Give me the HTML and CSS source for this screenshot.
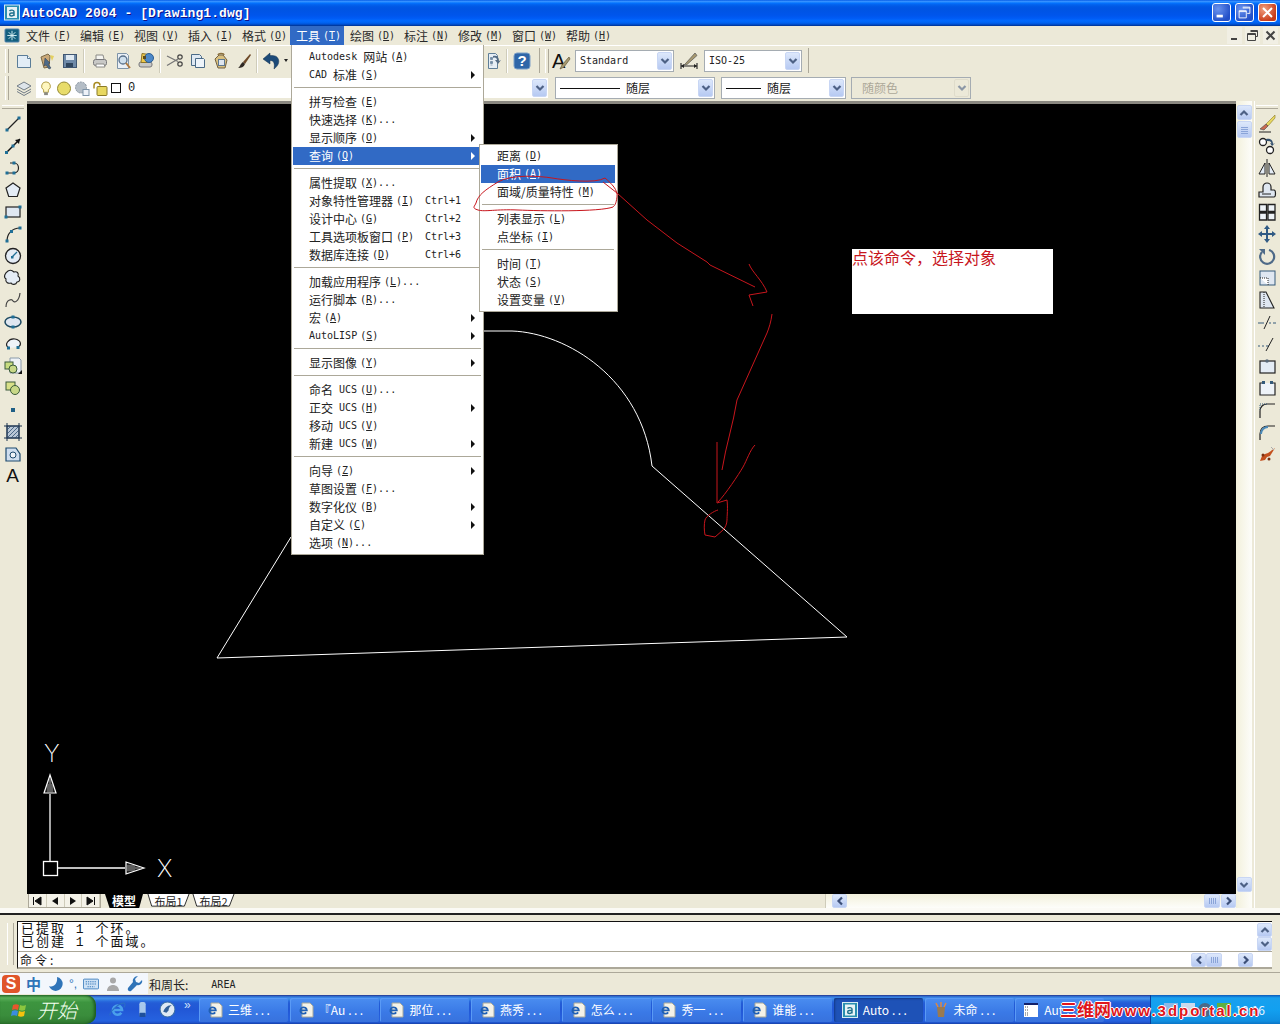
FILE: index.html
```html
<!DOCTYPE html>
<html lang="zh-CN">
<head>
<meta charset="utf-8">
<title>AutoCAD 2004 - [Drawing1.dwg]</title>
<link rel="stylesheet" href="styles.css">
</head>
<body>
<svg class="defs" aria-hidden="true">
  <defs>
    <symbol id="chev-d" viewBox="0 0 10 10"><path d="M1.500 3 5 6.500 8.500 3" fill="none" stroke="#4d6185" stroke-width="2.200"/></symbol>
    <symbol id="chev-u" viewBox="0 0 10 10"><path d="M1.500 7 5 3.500 8.500 7" fill="none" stroke="#4d6185" stroke-width="2.200"/></symbol>
    <symbol id="chev-l" viewBox="0 0 10 10"><path d="M7 1.500 3.500 5 7 8.500" fill="none" stroke="#3c4f78" stroke-width="2.200"/></symbol>
    <symbol id="chev-r" viewBox="0 0 10 10"><path d="M3 1.500 6.500 5 3 8.500" fill="none" stroke="#3c4f78" stroke-width="2.200"/></symbol>
    <symbol id="ie" viewBox="0 0 16 16"><path d="M4 8.500h8.300A4.300 4.300 0 1 0 11.600 11" fill="none" stroke="#4aa0ec" stroke-width="2.400"/><path d="M1 13.500C0 11 8 3 13 2c2.500-.5 2.500 2 1 4" fill="none" stroke="#2b6fc4" stroke-width="1"/></symbol>
    <symbol id="doc-ie" viewBox="0 0 16 16"><path d="M4 1h8l3 3v11H4z" fill="#f4f2e8" stroke="#a8a89c"/><path d="M2.500 8.300h6.300A3.200 3.200 0 1 0 8.200 10.400" fill="none" stroke="#1f5fb4" stroke-width="1.800"/></symbol>
    <symbol id="a-logo" viewBox="0 0 16 16"><rect x=".5" y=".5" width="15" height="15" fill="#2a8fb0" stroke="#d8ecf4"/><rect x="3" y="2.500" width="10" height="11" fill="#e8f3f6"/><path d="M5.500 6.500c1-1.300 4.500-1.300 4.500.6v4.400M10 8.500H7.500c-2.500 0-2.500 3 0 3 1 0 2-.5 2.500-1.300" fill="none" stroke="#1d6f8c" stroke-width="1.400"/></symbol>
  </defs>
</svg>

<div class="app">
  <header class="titlebar">
    <svg class="title-logo"><use href="#a-logo"/></svg>
    <span class="title-text">AutoCAD 2004 - [Drawing1.dwg]</span>
    <div class="caption">
      <span class="cap-btn"><svg viewBox="0 0 19 19"><rect x="4" y="12" width="7" height="3" fill="#fff"/></svg></span>
      <span class="cap-btn"><svg viewBox="0 0 19 19"><path d="M7.500 3.500h8v7h-3M3.500 7.500h8v8h-8z M3.500 8.500h8M7.500 4.500h8" fill="none" stroke="#fff"/></svg></span>
      <span class="cap-btn cap-close"><svg viewBox="0 0 19 19"><path d="M4.500 4.500l10 10M14.500 4.500l-10 10" stroke="#fff" stroke-width="2.200"/></svg></span>
    </div>
  </header>

  <nav class="menubar">
    <svg class="doc-icon" viewBox="0 0 16 16"><rect x=".5" y="1" width="15" height="14" rx="1" fill="#14607f" stroke="#5a86b0"/><path d="M8 3v10M3 8h10M4.500 4.500l7 7M11.500 4.500l-7 7" stroke="#d8f0f4" stroke-width="1"/></svg>
    <span class="mi">文件<span class="m k">(<u>F</u>)</span></span>
    <span class="mi">编辑<span class="m k">(<u>E</u>)</span></span>
    <span class="mi">视图<span class="m k">(<u>V</u>)</span></span>
    <span class="mi">插入<span class="m k">(<u>I</u>)</span></span>
    <span class="mi">格式<span class="m k">(<u>O</u>)</span></span>
    <span class="mi mi-on">工具<span class="m k">(<u>T</u>)</span></span>
    <span class="mi">绘图<span class="m k">(<u>D</u>)</span></span>
    <span class="mi">标注<span class="m k">(<u>N</u>)</span></span>
    <span class="mi">修改<span class="m k">(<u>M</u>)</span></span>
    <span class="mi">窗口<span class="m k">(<u>W</u>)</span></span>
    <span class="mi">帮助<span class="m k">(<u>H</u>)</span></span>
    <div class="mdi">
      <span class="mdi-btn"><svg viewBox="0 0 15 15"><rect x="4" y="10" width="6" height="2" fill="#444"/></svg></span>
      <span class="mdi-btn"><svg viewBox="0 0 15 15"><path d="M5.500 2.500h7v6h-2M2.500 5.500h8v7h-8zM2.500 6.500h8M5.500 3.500h7" fill="none" stroke="#444"/></svg></span>
      <span class="mdi-btn"><svg viewBox="0 0 15 15"><path d="M3.500 3.500l8 8M11.500 3.500l-8 8" stroke="#444" stroke-width="2"/></svg></span>
    </div>
  </nav>

  <div class="tbrow tbrow-1">
    <div class="grip-v"></div>
    <span class="tool"><svg viewBox="0 0 18 18"><path d="M2.500 3.500h10l3 3v9h-13z" fill="#e2edf6" stroke="#5b7d98"/><path d="M12.500 3.500v3h3" fill="#fff" stroke="#5b7d98"/></svg></span>
    <span class="tool"><svg viewBox="0 0 18 18"><path d="M3 5l7-3 2 2-1 11-5 1z" fill="#c9a878" stroke="#7b6a48"/><path d="M7 6l5 5-2 1 3 4-2 1-3-4-2 1z" fill="#4d6a88" stroke="#2a3d52" stroke-width=".5"/><path d="M12 3l4 1-2 5z" fill="#e4d060"/></svg></span>
    <span class="tool"><svg viewBox="0 0 18 18"><rect x="2.500" y="2.500" width="13" height="13" fill="#6f8aa8" stroke="#3f5672"/><rect x="5" y="3" width="8" height="5" fill="#dfe9f2"/><rect x="5" y="11" width="7" height="4" fill="#30465e"/></svg></span>
    <i class="sep sep-a"></i>
    <span class="tool"><svg viewBox="0 0 18 18"><path d="M5 7V3h7l1 4" fill="#f4f4f0" stroke="#8a8a86"/><rect x="2.500" y="7.500" width="13" height="6" rx="2" fill="#c8c8c6" stroke="#77777a"/><path d="M5 12h8l1 3H5z" fill="#fff" stroke="#8a8a86"/></svg></span>
    <span class="tool"><svg viewBox="0 0 18 18"><path d="M3.500 1.500h9l2 2v13h-11z" fill="#eaf0f6" stroke="#7d93a8"/><circle cx="9" cy="8" r="4" fill="#cfe0ee" stroke="#58708a" stroke-width="1.300"/><path d="M12 11l4 5" stroke="#b07a40" stroke-width="2"/></svg></span>
    <span class="tool"><svg viewBox="0 0 18 18"><rect x="2" y="10" width="13" height="5" rx="2" fill="#c8c8c6" stroke="#77777a"/><path d="M5 1.500l7 1-1 8H4z" fill="#efc94c" stroke="#8c7428"/><circle cx="12" cy="6" r="4.500" fill="#4c88c8" stroke="#2b5d93"/><rect x="6" y="4" width="3" height="3" fill="#5a4a20"/></svg></span>
    <i class="sep sep-b"></i>
    <span class="tool"><svg viewBox="0 0 18 18"><circle cx="14" cy="5" r="2.200" fill="none" stroke="#444" stroke-width="1.200"/><circle cx="14" cy="12" r="2.200" fill="none" stroke="#444" stroke-width="1.200"/><path d="M1 4l11 5.500M1 13.500L12 7" stroke="#777" stroke-width="1.300"/></svg></span>
    <span class="tool"><svg viewBox="0 0 18 18"><path d="M2.500 2.500h8l2 2v9h-10z" fill="#dfe9f3" stroke="#4b6b88"/><path d="M6.500 6.500h8l1 1v8h-9z" fill="#eef4fa" stroke="#4b6b88"/></svg></span>
    <span class="tool"><svg viewBox="0 0 18 18"><path d="M3 7l4-4h4l4 5-2 8H6z" fill="#d8c080" stroke="#736040"/><rect x="6.500" y="7.500" width="6" height="6" fill="#dfe6ef" stroke="#5e7890"/><path d="M6 3c0-2 6-2 6 0" fill="none" stroke="#8a6f3c" stroke-width="1.300"/></svg></span>
    <span class="tool"><svg viewBox="0 0 18 18"><path d="M15 2l-7 8 2 2 6-9z" fill="#6e4a28"/><path d="M8 10l2 2c-1 3-4 4-7 4 2-1 2-4 5-6z" fill="#302a24"/></svg></span>
    <i class="sep sep-c"></i>
    <span class="tool"><svg viewBox="0 0 18 18"><path d="M7 1L0 7l7 5V8.500c4 0 5 3 4 8.500 4-3 6-7 4-10.500C13.500 3.500 10.500 3.500 7 3.500z" fill="#1c4a78" stroke="#14304f" stroke-width=".5"/></svg></span>
    <i class="undo-arr"></i>
    <span class="tool-gap"></span>
    <span class="tool"><svg viewBox="0 0 18 18"><path d="M3.500 1.500h7l2 2v13h-9z" fill="#e6eef5" stroke="#5f7e98"/><path d="M5.500 5.500h2v2h-2zM5.500 9.500h2v2h-2zM5.500 13h2" fill="#6f8caa" stroke="#4a6680" stroke-width=".5"/><path d="M8 4c4-1 6 1 6 5l2-1-3 4-3-4h2c0-2-2-3-4-2z" fill="#536b84"/></svg></span>
    <i class="sep sep-d"></i>
    <span class="tool"><svg viewBox="0 0 18 18"><rect x="1" y="1" width="16" height="16" rx="3" fill="#2f66a8" stroke="#7da0c8"/><text x="9" y="14" class="q">?</text></svg></span>
    <div class="tb-end"></div>
    <div class="grip-v grip-2"></div>
    <span class="tool tool-a"><svg viewBox="0 0 20 22"><text x="1" y="18" class="big-a">A</text><path d="M18 7l-7 8-2 4 4-2 6-8z" fill="#a89a70" stroke="#5e5434" stroke-width=".7"/></svg></span>
    <div class="combo combo-std"><span class="m">Standard</span><span class="drop"><svg><use href="#chev-d"/></svg></span></div>
    <span class="tool tool-dim"><svg viewBox="0 0 20 20"><path d="M2 12v6M18 12v6M2 15h16" stroke="#222" stroke-width="1.100"/><path d="M2 15l3-2v4zM18 15l-3-2v4z" fill="#222"/><path d="M16 2L7 12l-2 2 3-.5 10-9z" fill="#a89a70" stroke="#555" stroke-width=".7"/></svg></span>
    <div class="combo combo-iso"><span class="m">ISO-25</span><span class="drop"><svg><use href="#chev-d"/></svg></span></div>
    <div class="tb-end"></div>
  </div>

  <div class="tbrow tbrow-2">
    <div class="grip-v"></div>
    <span class="tool tool-layers"><svg viewBox="0 0 18 18"><path d="M9 3l7 4-7 4-7-4z" fill="#dde4ea" stroke="#717c86"/><path d="M2 10l7 4 7-4M2 12.500l7 4 7-4" fill="none" stroke="#717c86"/></svg></span>
    <div class="combo combo-layer">
      <svg class="lay" viewBox="0 0 14 18"><path d="M7 2a4.600 4.600 0 0 0-2.500 8.500V13h5v-2.500A4.600 4.600 0 0 0 7 2z" fill="#fff7c0" stroke="#b09a40"/><rect x="5" y="13" width="4" height="3" fill="#8a8a80"/></svg>
      <svg class="lay" viewBox="0 0 16 16"><circle cx="8" cy="8" r="6.500" fill="#e8dc6a" stroke="#968a30"/></svg>
      <svg class="lay" viewBox="0 0 16 16"><circle cx="7" cy="7" r="5.500" fill="#b4bdc6" stroke="#8894a0" stroke-dasharray="2 1"/><rect x="9" y="9" width="6" height="6" fill="#eef2f8" stroke="#7d93a8"/></svg>
      <svg class="lay" viewBox="0 0 16 16"><path d="M2 8V5a3 3 0 0 1 6 0" fill="none" stroke="#a88a20" stroke-width="1.500"/><rect x="5" y="6" width="10" height="9" rx="1" fill="#e8d860" stroke="#8a7a28"/></svg>
      <i class="lay-box"></i><span class="lay-name">0</span>
      <span class="drop"><svg><use href="#chev-d"/></svg></span>
    </div>
    <div class="combo combo-ln1"><span class="ln ln-long"></span><span class="cj">随层</span><span class="drop"><svg><use href="#chev-d"/></svg></span></div>
    <div class="combo combo-ln2"><span class="ln ln-short"></span><span class="cj">随层</span><span class="drop"><svg><use href="#chev-d"/></svg></span></div>
    <div class="combo combo-off"><span class="cj">随颜色</span><span class="drop drop-off"><svg><use href="#chev-d"/></svg></span></div>
  </div>

  <main class="work">
    <aside class="vbar">
      <div class="grip-h"></div>
      <span class="vt"><svg viewBox="0 0 20 20"><path d="M4 16L16 4" stroke="#222" stroke-width="1.200"/><rect x="2.500" y="14.500" width="3" height="3" fill="#1f6f96"/><rect x="14.500" y="2.500" width="3" height="3" fill="#1f6f96"/></svg></span>
      <span class="vt"><svg viewBox="0 0 20 20"><path d="M3 17L17 3" stroke="#111" stroke-width="1.500"/><rect x="8.500" y="8.500" width="3" height="3" fill="#1f6f96"/><rect x="2" y="15" width="3" height="3" fill="#1f6f96"/><path d="M17 3l-5 1 4 4z" fill="#111"/></svg></span>
      <span class="vt"><svg viewBox="0 0 20 20"><path d="M4 15h7M11 5c6 0 6 10 0 10" fill="none" stroke="#222" stroke-width="1.200"/><path d="M7 5h4" stroke="#222"/><rect x="2.500" y="13.500" width="3" height="3" fill="#1f6f96"/><rect x="9.500" y="13.500" width="3" height="3" fill="#1f6f96"/><rect x="9.500" y="3.500" width="3" height="3" fill="#1f6f96"/></svg></span>
      <span class="vt"><svg viewBox="0 0 20 20"><path d="M10 3l7 5-2.700 8.500H5.700L3 8z" fill="#e4ecf5" stroke="#222" stroke-width="1.200"/></svg></span>
      <span class="vt"><svg viewBox="0 0 20 20"><rect x="3" y="5" width="14" height="10" fill="#dfe7f1" stroke="#222" stroke-width="1.200"/><rect x="1.500" y="13.500" width="3" height="3" fill="#1f6f96"/><rect x="15.500" y="3.500" width="3" height="3" fill="#1f6f96"/></svg></span>
      <span class="vt"><svg viewBox="0 0 20 20"><path d="M4 17C4 10 9 4 17 4" fill="none" stroke="#222" stroke-width="1.200"/><rect x="2.500" y="15.500" width="3" height="3" fill="#1f6f96"/><rect x="7" y="6" width="3" height="3" fill="#1f6f96"/><rect x="15.500" y="2.500" width="3" height="3" fill="#1f6f96"/></svg></span>
      <span class="vt"><svg viewBox="0 0 20 20"><circle cx="10" cy="10" r="7.500" fill="#e4ecf5" stroke="#222" stroke-width="1.300"/><path d="M9 11l5-5" stroke="#1f6f96" stroke-width="1.300"/><rect x="8" y="10" width="2.500" height="2.500" fill="#1f6f96"/></svg></span>
      <span class="vt"><svg viewBox="0 0 20 20"><path d="M5 3c3-2 5 0 6 1 3-1 5 1 4 4 3 2 2 6-1 6-1 3-5 3-6 1-3 1-6-1-5-4-3-2-1-6 2-8z" fill="#e4ecf5" stroke="#222" stroke-width="1.100"/></svg></span>
      <span class="vt"><svg viewBox="0 0 20 20"><path d="M3 17C3 9 9 9 10 11s6 1 7-8" fill="none" stroke="#444" stroke-width="1.200"/></svg></span>
      <span class="vt"><svg viewBox="0 0 20 20"><ellipse cx="10" cy="10" rx="8" ry="5" fill="#dfe7f1" stroke="#1c4860" stroke-width="1.500"/><rect x="8.500" y="3.500" width="3" height="3" fill="#1f6f96"/><rect x="8.500" y="13.500" width="3" height="3" fill="#1f6f96"/></svg></span>
      <span class="vt"><svg viewBox="0 0 20 20"><path d="M6 14C0 11 6 4 12 5s7 6 3 8" fill="#eef3f8" stroke="#222" stroke-width="1.200"/><rect x="4" y="12.500" width="3" height="3" fill="#1f6f96"/><rect x="13.500" y="12" width="3" height="3" fill="#1f6f96"/></svg></span>
      <span class="vt"><svg viewBox="0 0 20 20"><path d="M7 2h9l2 2v13H7z" fill="#eef2f6" stroke="#8a9aaa"/><rect x="2" y="6" width="8" height="7" fill="#c8dc80" stroke="#3a5a3a"/><circle cx="10" cy="13" r="4" fill="#c8d888" stroke="#3a5a3a"/><path d="M15 18l4-4v4z" fill="#111"/></svg></span>
      <span class="vt"><svg viewBox="0 0 20 20"><rect x="3" y="4" width="9" height="8" fill="#d8e088" stroke="#3a5a3a"/><circle cx="12" cy="12" r="4.500" fill="#c8d888" stroke="#3a5a3a"/></svg></span>
      <span class="vt"><svg viewBox="0 0 20 20"><rect x="8" y="8" width="4" height="4" fill="#1f5f86"/></svg></span>
      <span class="vt"><svg viewBox="0 0 20 20"><rect x="4" y="4" width="12" height="12" fill="#b9c7d6" stroke="#1d3550"/><path d="M4 8l4-4M4 12l8-8M4 16L16 4M8 16l8-8M12 16l4-4" stroke="#4d6a88"/><path d="M1 4h18M1 16h18M4 1v18M16 1v18" stroke="#1d3550"/></svg></span>
      <span class="vt"><svg viewBox="0 0 20 20"><path d="M3 4h10l4 6v7H3z" fill="#cfdeef" stroke="#1d4a6e" stroke-width="1.200"/><circle cx="10" cy="11" r="3" fill="#eef3f8" stroke="#1d4a6e"/></svg></span>
      <span class="vt vt-a">A</span>
    </aside>

    <div class="centre">
      <div class="view">
        <svg class="drawing" viewBox="0 0 1209 790" aria-hidden="true">
          <path d="M457 227H485C540 229 615 275 625 362L820 533 190 554 264 433" fill="none" stroke="#fff"/>
          <path d="M23 690V757" stroke="#fff" stroke-width="1.300"/>
          <path d="M23 671l-6 18h12z" fill="#222" stroke="#fff" stroke-width="1.200"/>
          <path d="M23 675v14M21 680v9M25 680v9" stroke="#999"/>
          <rect x="16.500" y="757.500" width="14" height="14" fill="none" stroke="#fff" stroke-width="1.300"/>
          <path d="M31 764H98" stroke="#fff" stroke-width="1.300"/>
          <path d="M117 764l-18-6v12z" fill="#222" stroke="#fff" stroke-width="1.200"/>
          <path d="M99 764h14M99 762h9M99 766h9" stroke="#999"/>
        </svg>
        <span class="axis axis-y">Y</span>
        <span class="axis axis-x">X</span>
        <div class="note">点该命令，选择对象</div>
      </div>
      <div class="tabrow">
        <div class="navbtns">
          <span class="nav"><svg viewBox="0 0 12 12"><path d="M2.500 2v8M10 2L4 6l6 4z" fill="#111" stroke="#111"/></svg></span>
          <span class="nav"><svg viewBox="0 0 12 12"><path d="M9 2L3 6l6 4z" fill="#111"/></svg></span>
          <span class="nav"><svg viewBox="0 0 12 12"><path d="M3 2l6 4-6 4z" fill="#111"/></svg></span>
          <span class="nav"><svg viewBox="0 0 12 12"><path d="M9.500 2v8M2 2l6 4-6 4z" fill="#111" stroke="#111"/></svg></span>
        </div>
        <span class="tab tab-on">模型</span>
        <span class="tab"><svg class="tab-edge" viewBox="0 0 46 15"><path d="M1 0l4 13H40L45 0" fill="#fff" stroke="#222"/></svg><span class="tab-t">布局1</span></span>
        <span class="tab"><svg class="tab-edge" viewBox="0 0 46 15"><path d="M1 0l4 13H40L45 0" fill="#fff" stroke="#222"/></svg><span class="tab-t">布局2</span></span>
        <div class="hscroll">
          <span class="sb sb-l"><svg><use href="#chev-l"/></svg></span>
          <span class="track"></span>
          <span class="sb sb-thumb"><i></i></span>
          <span class="sb sb-r"><svg><use href="#chev-r"/></svg></span>
        </div>
      </div>
    </div>

    <div class="vscroll">
      <span class="sb"><svg><use href="#chev-u"/></svg></span>
      <span class="sb sb-vthumb"><i></i></span>
      <span class="vtrack"></span>
      <span class="sb"><svg><use href="#chev-d"/></svg></span>
    </div>

    <aside class="vbar vbar-r">
      <div class="grip-h"></div>
      <span class="vt"><svg viewBox="0 0 20 20"><path d="M18 1l-9 9 2 2 7-8z" fill="#e8d860" stroke="#8a7a28" stroke-width=".6"/><path d="M9 10l2 2-4 4-4-1z" fill="#c86a50" stroke="#444" stroke-width=".6"/><path d="M2 18h12" stroke="#222"/></svg></span>
      <span class="vt"><svg viewBox="0 0 20 20"><circle cx="6" cy="6" r="3.500" fill="#fff" stroke="#222" stroke-width="1.300"/><circle cx="13" cy="14" r="3.500" fill="#fff" stroke="#222" stroke-width="1.300"/><path d="M9 3c4-1 7 1 7 5l2-1-3 3-2-3 1.500.5C14 5 12 5 9 5z" fill="#33506e"/></svg></span>
      <span class="vt"><svg viewBox="0 0 20 20"><path d="M10 1v18" stroke="#222"/><path d="M8 5v11H2zM12 5v11h6z" fill="#e4ecf5" stroke="#222"/></svg></span>
      <span class="vt"><svg viewBox="0 0 20 20"><path d="M2 17v-5h4V7a4 4 0 0 1 8 0v3h3c2 0 2 7 0 7z" fill="#dfe7f1" stroke="#222" stroke-width="1.200"/><path d="M5 14h9" stroke="#222"/></svg></span>
      <span class="vt"><svg viewBox="0 0 20 20"><path d="M2.500 2.500h7v7h-7zM11 2.500h7v7h-7zM2.500 11h7v7h-7zM11 11h7v7h-7z" fill="#eef3f8" stroke="#222" stroke-width="1.300"/></svg></span>
      <span class="vt"><svg viewBox="0 0 20 20"><path d="M10 1l3 4h-2v4h4V7l4 3-4 3v-2h-4v4h2l-3 4-3-4h2v-4H5v2l-4-3 4-3v2h4V5H7z" fill="#305a84"/></svg></span>
      <span class="vt"><svg viewBox="0 0 20 20"><path d="M5 6a7 7 0 1 0 7-2" fill="none" stroke="#4e6a88" stroke-width="2.200"/><path d="M2 3h6v6z" fill="#4e6a88"/></svg></span>
      <span class="vt"><svg viewBox="0 0 20 20"><rect x="3" y="3" width="15" height="14" fill="#dfe7f1" stroke="#345a7a"/><path d="M3 10h8v7" fill="#fff" stroke="#222" stroke-dasharray="1 1"/></svg></span>
      <span class="vt"><svg viewBox="0 0 20 20"><path d="M3 2v16h14L9 2z" fill="#dfe7f1" stroke="#222" stroke-width="1.100"/><path d="M7 2v16" stroke="#222" stroke-dasharray="1 1"/></svg></span>
      <span class="vt"><svg viewBox="0 0 20 20"><path d="M1 11h6M12 11h2M16 11h3" stroke="#345a7a" stroke-width="1.100"/><path d="M7 17L13 4" stroke="#222"/></svg></span>
      <span class="vt"><svg viewBox="0 0 20 20"><path d="M1 12h2M5 12h2M9 12h3" stroke="#345a7a" stroke-width="1.100"/><path d="M9 17L16 4" stroke="#222"/></svg></span>
      <span class="vt"><svg viewBox="0 0 20 20"><rect x="3" y="5" width="15" height="12" fill="#e4ecf5" stroke="#222" stroke-width="1.200"/><circle cx="10" cy="5" r="1.800" fill="#5a6a7a"/></svg></span>
      <span class="vt"><svg viewBox="0 0 20 20"><path d="M7 5H3v12h15V5h-4" fill="#eef3f8" stroke="#222" stroke-width="1.200"/><rect x="5" y="3" width="3" height="3" fill="#345a7a"/><rect x="13" y="3" width="3" height="3" fill="#345a7a"/></svg></span>
      <span class="vt"><svg viewBox="0 0 20 20"><path d="M3 18v-7c0-4 3-7 7-7h8" fill="none" stroke="#222" stroke-width="1.200"/><path d="M3 10V4h7" fill="none" stroke="#345a7a" stroke-dasharray="1 1"/></svg></span>
      <span class="vt"><svg viewBox="0 0 20 20"><path d="M3 18v-6c0-5 3-8 8-8h7" fill="none" stroke="#222" stroke-width="1.200"/><path d="M4 12c0-4 3-7 7-7" fill="none" stroke="#4c8ab8" stroke-width="2"/></svg></span>
      <span class="vt"><svg viewBox="0 0 20 20"><path d="M3 17l5-1 2-3 3-1 5-8-7 5-3 1-3 2z" fill="#c4501e"/><circle cx="6" cy="11" r="1.500" fill="#7a3010"/><circle cx="12" cy="15" r="1.500" fill="#7a3010"/><path d="M14 3l3 3" stroke="#aaa"/></svg></span>
    </aside>
  </main>

  <div class="workfoot"></div>

  <section class="command">
    <div class="grip-v grip-cmd"></div>
    <div class="cmdbox">
      <div class="log">
        <div class="log-text">已提取 1 个环。<br>已创建 1 个面域。</div>
        <div class="log-scroll">
          <span class="sb"><svg><use href="#chev-u"/></svg></span>
          <span class="sb"><svg><use href="#chev-d"/></svg></span>
        </div>
      </div>
      <div class="prompt">
        <span class="prompt-t">命令:</span>
        <div class="pscroll">
          <span class="sb"><svg><use href="#chev-l"/></svg></span>
          <span class="sb sb-thumb"><i></i></span>
          <span class="ptrack"></span>
          <span class="sb"><svg><use href="#chev-r"/></svg></span>
        </div>
      </div>
    </div>
  </section>

  <div class="status"><span>和周长:</span><span class="m status-cmd">AREA</span></div>

  <footer class="taskbar">
    <div class="start">
      <svg viewBox="0 0 18 18"><path d="M2 4c2-1 4-1 6 0l-1 5c-2-1-4-1-6 0z" fill="#e8562c"/><path d="M9 4c2 1 4 1 6 0l-1 5c-2 1-4 1-6 0z" fill="#8cc63f"/><path d="M1 10c2-1 4-1 6 0l-1 5c-2-1-4-1-6 0z" fill="#3c8ce0"/><path d="M8 10c2 1 4 1 6 0l-1 5c-2 1-4 1-6 0z" fill="#f6c20e"/></svg>
      <span>开始</span>
    </div>
    <div class="quick">
      <svg viewBox="0 0 16 16"><use href="#ie"/></svg>
      <svg viewBox="0 0 16 16"><rect x="5" y="1" width="6" height="14" rx="2" fill="#a8c8ec"/><rect x="5" y="11" width="6" height="4" rx="1" fill="#1e4f9c"/></svg>
      <svg viewBox="0 0 16 16"><circle cx="8" cy="8" r="7" fill="#dfe9f4" stroke="#3a6ea8"/><path d="M4 10c2-5 5-6 8-6-2 1-3 3-3 5l-2 2z" fill="#315f98"/></svg>
      <span class="more">»</span>
    </div>
    <div class="tasks">
      <span class="task"><svg><use href="#doc-ie"/></svg><span>三维<b>...</b></span></span>
      <span class="task"><svg><use href="#doc-ie"/></svg><span>『Au<b>...</b></span></span>
      <span class="task"><svg><use href="#doc-ie"/></svg><span>那位<b>...</b></span></span>
      <span class="task"><svg><use href="#doc-ie"/></svg><span>燕秀<b>...</b></span></span>
      <span class="task"><svg><use href="#doc-ie"/></svg><span>怎么<b>...</b></span></span>
      <span class="task"><svg><use href="#doc-ie"/></svg><span>秀一<b>...</b></span></span>
      <span class="task"><svg><use href="#doc-ie"/></svg><span>谁能<b>...</b></span></span>
      <span class="task task-on"><svg><use href="#a-logo"/></svg><span>Auto<b>...</b></span></span>
      <span class="task"><svg viewBox="0 0 16 16"><path d="M4 5h8l-1 10H5z" fill="#9a7a50"/><path d="M5 5L3 1M8 5V0M11 5l2-4" stroke="#d84" stroke-width="1.500"/></svg><span>未命<b>...</b></span></span>
      <span class="task"><svg viewBox="0 0 16 16"><rect x="1" y="1" width="14" height="14" fill="#fff"/><rect x="1" y="1" width="14" height="2" fill="#12206a"/><path d="M2 5h4M2 8h4M2 11h4M2 13h4" stroke="#555" stroke-dasharray="1 1"/></svg><span>Aut<b>...</b></span></span>
    </div>
    <div class="tray">
      <i class="ti ti-a"></i><i class="ti ti-b"></i><i class="ti ti-c"></i><i class="ti ti-d"></i>
      <span class="clock">10:16</span>
    </div>
  </footer>
</div>

<div class="ime">
  <span class="ime-s">S</span>
  <span class="ime-zh">中</span>
  <svg viewBox="0 0 16 16"><path d="M10 1a7 7 0 1 1-8 9c4 2 9-2 8-9z" fill="#2f74b8"/></svg>
  <span class="ime-p">°,</span>
  <svg viewBox="0 0 18 14"><rect x=".5" y="1.500" width="17" height="11" rx="1" fill="#cfe2f5" stroke="#3d7dbc"/><path d="M3 4.500h12M3 7h12M5 10h8" stroke="#3d7dbc" stroke-dasharray="1.500 1" stroke-width="1.200"/></svg>
  <svg viewBox="0 0 16 16"><circle cx="8" cy="4.500" r="3" fill="#a8a8a8"/><path d="M2 15c0-8 12-8 12 0z" fill="#a8a8a8"/></svg>
  <svg viewBox="0 0 16 16"><path d="M15 4l-3 3-3-1-1-3 3-3C8 0 5 3 6 6L1 12c-1 2 1 4 3 3l6-6c3 1 6-2 5-5z" fill="#2f74b8"/></svg>
</div>

<div class="menu menu-main">
  <div class="row"><span class="m">Autodesk</span><span class="gap6"></span>网站<span class="m k">(<u>A</u>)</span></div>
  <div class="row"><span class="m">CAD</span><span class="gap6"></span>标准<span class="m k">(<u>S</u>)</span><i class="arr"></i></div>
  <hr>
  <div class="row">拼写检查<span class="m k">(<u>E</u>)</span></div>
  <div class="row">快速选择<span class="m k">(<u>K</u>)...</span></div>
  <div class="row">显示顺序<span class="m k">(<u>O</u>)</span><i class="arr"></i></div>
  <div class="row row-on">查询<span class="m k">(<u>Q</u>)</span><i class="arr"></i></div>
  <hr>
  <div class="row">属性提取<span class="m k">(<u>X</u>)...</span></div>
  <div class="row">对象特性管理器<span class="m k">(<u>I</u>)</span><span class="m acc">Ctrl+1</span></div>
  <div class="row">设计中心<span class="m k">(<u>G</u>)</span><span class="m acc">Ctrl+2</span></div>
  <div class="row">工具选项板窗口<span class="m k">(<u>P</u>)</span><span class="m acc">Ctrl+3</span></div>
  <div class="row">数据库连接<span class="m k">(<u>D</u>)</span><span class="m acc">Ctrl+6</span></div>
  <hr>
  <div class="row">加载应用程序<span class="m k">(<u>L</u>)...</span></div>
  <div class="row">运行脚本<span class="m k">(<u>R</u>)...</span></div>
  <div class="row">宏<span class="m k">(<u>A</u>)</span><i class="arr"></i></div>
  <div class="row"><span class="m">AutoLISP</span><span class="m k">(<u>S</u>)</span><i class="arr"></i></div>
  <hr>
  <div class="row">显示图像<span class="m k">(<u>Y</u>)</span><i class="arr"></i></div>
  <hr>
  <div class="row">命名<span class="gap6"></span><span class="m">UCS</span><span class="m k">(<u>U</u>)...</span></div>
  <div class="row">正交<span class="gap6"></span><span class="m">UCS</span><span class="m k">(<u>H</u>)</span><i class="arr"></i></div>
  <div class="row">移动<span class="gap6"></span><span class="m">UCS</span><span class="m k">(<u>V</u>)</span></div>
  <div class="row">新建<span class="gap6"></span><span class="m">UCS</span><span class="m k">(<u>W</u>)</span><i class="arr"></i></div>
  <hr>
  <div class="row">向导<span class="m k">(<u>Z</u>)</span><i class="arr"></i></div>
  <div class="row">草图设置<span class="m k">(<u>F</u>)...</span></div>
  <div class="row">数字化仪<span class="m k">(<u>B</u>)</span><i class="arr"></i></div>
  <div class="row">自定义<span class="m k">(<u>C</u>)</span><i class="arr"></i></div>
  <div class="row">选项<span class="m k">(<u>N</u>)...</span></div>
</div>

<div class="menu menu-sub">
  <div class="row">距离<span class="m k">(<u>D</u>)</span></div>
  <div class="row row-on">面积<span class="m k">(<u>A</u>)</span></div>
  <div class="row">面域/质量特性<span class="m k">(<u>M</u>)</span></div>
  <hr>
  <div class="row">列表显示<span class="m k">(<u>L</u>)</span></div>
  <div class="row">点坐标<span class="m k">(<u>I</u>)</span></div>
  <hr>
  <div class="row">时间<span class="m k">(<u>T</u>)</span></div>
  <div class="row">状态<span class="m k">(<u>S</u>)</span></div>
  <div class="row">设置变量<span class="m k">(<u>V</u>)</span></div>
</div>

<svg class="marks" viewBox="0 0 1280 1024" aria-hidden="true">
  <path d="M476 203C478 195 485 190 498 182S540 176 552 178 595 184 605 178C612 184 618 190 617 197S615 205 613 207C600 212 540 211 518 210S485 212 478 210 475 206 476 203z"/>
  <path d="M603 182L617 193 647 220 677 243 707 262 710 265 755 287"/>
  <path d="M749 264C752 272 762 280 767 292L749 295 753 306"/>
  <path d="M772 314C771 322 769 328 767 333L737 400C733 425 726 445 722 470"/>
  <path d="M717 442V503L727 500C728 508 727 516 727 520S725 528 723 530L715 537 705 535C704 530 704 524 705 520S714 511 718 510"/>
  <path d="M755 445C750 450 747 460 743 467S725 495 718 502"/>
</svg>
<div class="wm"><span>三维网</span>www.3dportal.cn</div>
</body>
</html>
```
FILE: styles.css
```css
* { box-sizing: border-box; }
html, body { margin: 0; padding: 0; width: 1280px; height: 1024px; overflow: hidden; }
body { position: relative; background: #ece9d8; font: 12px/1 "Noto Sans CJK SC", "Liberation Sans", sans-serif; color: #222; }
.defs { position: absolute; width: 0; height: 0; }
svg { display: block; flex: none; }
.app { display: flex; flex-direction: column; width: 1280px; height: 1024px; }
.m { font-family: "DejaVu Sans Mono", "Noto Sans CJK SC", monospace; font-size: 10px; }
.k { margin-left: 3px; }
.gap6 { display: inline-block; width: 6px; }

.titlebar { height: 26px; flex: none; display: flex; align-items: center; padding: 0 3px 1px 4px;
  background: linear-gradient(#0058e6 0, #3a93ff 5%, #1a84ff 9%, #036ffc 13%, #0262ee 18%, #0057e5 26%, #0054e3 35%, #0055eb 58%, #005bf5 70%, #026afe 80%, #0062ef 88%, #0052d6 93%, #0040ab 97%, #003092 100%); }
.title-logo { width: 16px; height: 17px; margin-right: 2px; }
.title-text { font: bold 13px/1 "Liberation Mono", monospace; color: #fff; text-shadow: 1px 1px 0 #0f1089; letter-spacing: .08px; padding-top: 2px; }
.caption { margin-left: auto; display: flex; gap: 4px; }
.cap-btn { width: 19px; height: 19px; border: 1px solid #fff; border-radius: 3px; background: radial-gradient(circle at 30% 30%, #6a93ee, #2350c8 75%); overflow: hidden; }
.cap-btn svg { width: 17px; height: 17px; }
.cap-close { background: radial-gradient(circle at 30% 30%, #f0a080, #c83a18 75%); }

.menubar { height: 19px; flex: none; display: flex; align-items: center; padding-left: 4px; background: #ece9d8; position: relative; }
.doc-icon { width: 16px; height: 15px; }
.mi { width: 54px; height: 19px; display: flex; align-items: center; padding-left: 6px; white-space: nowrap; color: #2a2a2a; }
.mi-on { background: #316ac5; color: #fff; }
.mdi { margin-left: auto; display: flex; gap: 3px; padding-right: 2px; }
.mdi-btn { width: 15px; height: 17px; background: #f1efe4; display: flex; align-items: center; }
.mdi-btn svg { width: 15px; height: 15px; }

.tbrow { height: 28px; flex: none; display: flex; align-items: center; padding-left: 5px; background: #ece9d8; }
.tbrow-1 { border-top: 1px solid #fff; padding-top: 2px; }
.tbrow-2 { padding-top: 2px; }
.grip-v { width: 4px; height: 24px; margin-right: 3px; border-left: 1px solid #fff; border-right: 1px solid #aca899; background: #ece9d8; flex: none; }
.tool { width: 23px; height: 24px; display: flex; align-items: center; justify-content: center; flex: none; }
.tool svg { width: 18px; height: 18px; }
.sep { width: 2px; height: 24px; border-left: 1px solid #cfccba; border-right: 1px solid #fff; flex: none; }
.sep-a { margin: 0 3px 0 2px; }
.sep-b { margin: 0 2px 0 2px; }
.sep-c { margin: 0 2px 0 1px; }
.sep-d { margin: 0 2px 0 1px; }
.undo-arr { width: 0; height: 0; border-style: solid; border-width: 3px 2px 0 2px; border-color: #222 transparent transparent; margin-left: 1px; flex: none; }
.tool-gap { width: 194px; flex: none; }
.tb-end { width: 3px; height: 26px; border-right: 1px solid #aca899; margin-left: 4px; flex: none; }
.grip-2 { margin-left: 5px; margin-right: 1px; }
.tool-a { width: 22px; margin-right: 3px; }
.tool-a svg { width: 20px; height: 22px; }
.big-a { font: 20px "Liberation Sans", sans-serif; fill: #111; }
.q { font: bold 15px "Liberation Sans", sans-serif; fill: #fff; text-anchor: middle; }
.tool-dim { width: 30px; }
.tool-dim svg { width: 20px; height: 20px; }

.combo { height: 22px; display: flex; align-items: center; background: #fff; border: 1px solid #a5acb2; padding: 0 1px 0 4px; flex: none; position: relative; }
.drop { margin-left: auto; width: 15px; height: 18px; background: linear-gradient(#dde8fb, #b6c9f2); border: 1px solid #c8d6f4; border-radius: 2px; display: flex; align-items: center; justify-content: center; flex: none; }
.drop svg, .sb svg { width: 10px; height: 10px; }
.combo-std { width: 99px; }
.combo-iso { width: 98px; }
.tool-layers { width: 22px; margin-left: 1px; }
.combo-layer { width: 514px; padding-left: 2px; gap: 2px; border-color: #ece9d8; }
.lay { width: 16px; height: 17px; }
.lay-box { width: 10px; height: 10px; border: 1px solid #111; margin-left: 1px; flex: none; }
.lay-name { font: 12px "Liberation Mono", monospace; margin-left: 5px; }
.combo-ln1 { width: 160px; margin-left: 6px; }
.combo-ln2 { width: 125px; margin-left: 6px; }
.combo-off { width: 120px; margin-left: 5px; background: #ece9d8; color: #aca899; padding-left: 10px; }
.drop-off { background: #ece9d8; border-color: #d8d5c4; opacity: .6; }
.ln { height: 1px; background: #111; flex: none; }
.ln-long { width: 60px; }
.ln-short { width: 35px; }
.cj { margin-left: 6px; font-size: 12px; }
.combo-off .cj { margin-left: 0; }

.work { height: 807px; flex: none; display: flex; }
.vbar { width: 27px; flex: none; background: #ece9d8; display: flex; flex-direction: column; align-items: center; padding: 4px 2px 0 0; }
.vbar-r { width: 26px; margin-left: 2px; border-left: 1px solid #fff; }
.grip-h { width: 22px; height: 4px; border-top: 1px solid #fff; border-bottom: 1px solid #aca899; margin-bottom: 4px; flex: none; }
.vt { width: 22px; height: 22px; display: flex; align-items: center; justify-content: center; flex: none; }
.vt svg { width: 20px; height: 20px; }
.vt-a { font: 19px "Liberation Sans", sans-serif; color: #111; }

.centre { width: 1209px; flex: none; display: flex; flex-direction: column; }
.view { position: relative; height: 793px; flex: none; background: #000; border-top: 3px solid #8a8880; overflow: hidden; }
.drawing { position: absolute; left: 0; top: 0; width: 1209px; height: 790px; }
.axis { position: absolute; color: #fff; font: 200 24px/1 Inter, "Liberation Sans", sans-serif; }
.axis-y { left: 17px; top: 638px; }
.axis-x { left: 130px; top: 753px; }
.note { position: absolute; left: 825px; top: 145px; width: 201px; height: 65px; background: #fff; color: #c8161d; font-size: 16px; line-height: 14px; padding-top: 1px; }

.tabrow { height: 14px; flex: none; display: flex; align-items: flex-start; background: #ece9d8; padding-left: 1px; }
.navbtns { display: flex; width: 73px; height: 14px; border: 1px solid #aca899; border-top: 0; background: #f4f2e8; margin-right: 4px; flex: none; }
.nav { width: 18px; display: flex; align-items: center; justify-content: center; border-right: 1px solid #cfccba; }
.nav svg { width: 12px; height: 12px; }
.tab { position: relative; width: 45px; height: 14px; margin-right: 0; display: flex; align-items: center; justify-content: center; font-size: 12px; }
.tab-on { width: 38px; margin-right: 3px; background: #000; color: #fff; font-weight: 700; clip-path: polygon(0 0, 100% 0, 90% 100%, 12% 100%); }
.tab-edge { position: absolute; left: 0; top: 0; width: 45px; height: 14px; }
.tab-t { position: relative; font-size: 11px; }
.hscroll { margin-left: auto; width: 411px; height: 14px; display: flex; background: linear-gradient(#f3f1dc, #fdfdfa); padding-left: 6px; border-left: 1px solid #cfccba; }
.sb { width: 15px; height: 14px; background: linear-gradient(#dde8fb, #b6c9f2); border: 1px solid #c8d6f4; border-radius: 2px; display: flex; align-items: center; justify-content: center; flex: none; }
.sb i { display: block; width: 7px; height: 6px; background: repeating-linear-gradient(90deg, #8aa4d8 0 1px, transparent 1px 2px); }
.track { flex: 1; }
.sb-thumb { width: 16px; }
.sb-r { margin-left: 1px; }

.vscroll { width: 16px; flex: none; display: flex; flex-direction: column; align-items: center; padding: 4px 0 16px; background: linear-gradient(90deg, #f3f1dc, #fdfdfa); }
.vscroll .sb { height: 15px; }
.vscroll .sb-vthumb { height: 17px; margin-top: 1px; }
.sb-vthumb i { width: 7px; height: 8px; background: repeating-linear-gradient(0deg, #8aa4d8 0 1px, transparent 1px 2px); }
.vtrack { flex: 1; }

.workfoot { height: 9px; flex: none; background: #ece9d8; border-top: 5px solid #fbfaf5; border-bottom: 2px solid #ece9d8; box-shadow: inset 0 -2px 0 #222; }

.command { height: 55px; flex: none; display: flex; padding: 4px 8px 3px 7px; background: #ece9d8; }
.grip-cmd { height: 42px; width: 7px; margin: 2px 3px 0 0; }
.cmdbox { flex: 1; display: flex; flex-direction: column; background: #fff; border-top: 1px solid #111; border-left: 1px solid #111; border-bottom: 2px solid #aca899; }
.log { height: 30px; display: flex; flex: none; border-bottom: 1px solid #aca899; }
.log-text { font: 13px/13px "Liberation Mono", "Noto Sans CJK SC", monospace; letter-spacing: 2px; padding: 1px 0 0 3px; color: #111; white-space: nowrap; }
.log-scroll { margin-left: auto; width: 15px; display: flex; flex-direction: column; padding-top: 1px; }
.prompt { flex: 1; display: flex; align-items: center; min-height: 0; padding-left: 2px; }
.prompt-t { font-size: 12px; letter-spacing: 3px; color: #111; }
.pscroll { margin-left: auto; width: 62px; display: flex; margin-right: 19px; }
.ptrack { flex: 1; }

.status { height: 23px; flex: none; display: flex; align-items: center; padding: 2px 0 0 149px; background: #ece9d8; border-top: 1px solid #aca899; }
.status-cmd { margin-left: 23px; }

.taskbar { height: 29px; flex: none; display: flex; align-items: stretch; color: #fff;
  background: linear-gradient(#1f2f86 0, #3165c4 4%, #3682e5 8%, #4490e6 12%, #3883e5 16%, #2b71e0 20%, #2663da 24%, #235bd6 30%, #2157d6 50%, #245ddb 70%, #2562df 88%, #2158d4 94%, #1941a5 100%); }
.start { width: 96px; flex: none; display: flex; align-items: center; gap: 8px; padding-left: 11px; border-radius: 0 10px 10px 0; background: linear-gradient(#2f7c33 0, #5bb05a 10%, #3d953f 25%, #3a8d3c 70%, #2f7a30 100%); box-shadow: inset -2px 0 3px #1d5a20; }
.start svg { width: 18px; height: 18px; }
.start span { font-size: 20px; font-style: italic; font-weight: 300; color: #f4fff0; }
.quick { width: 103px; flex: none; display: flex; align-items: center; padding-left: 13px; gap: 8px; }
.quick svg { width: 17px; height: 17px; }
.more { font: 12px "Liberation Sans", sans-serif; margin: -10px 0 0 0; color: #cfe0fa; }
.tasks { display: flex; gap: 1.7px; padding-top: 3px; flex: none; }
.task { width: 89px; height: 24px; display: flex; align-items: center; gap: 5px; padding-left: 8px; border-radius: 2px; background: linear-gradient(#4a8df0, #3a79e6 60%, #3872dd); font-size: 12px; box-shadow: inset 1px 1px 0 #5a9af5; white-space: nowrap; }
.task svg { width: 16px; height: 16px; }
.task b { font-weight: 400; letter-spacing: 2.400px; margin-left: 3px; }
.task-on { background: #1e52b7; box-shadow: inset 1px 1px 2px #143a88; }
.tray { margin-left: auto; width: 130px; flex: none; display: flex; align-items: center; gap: 3px; padding-left: 13px; background: linear-gradient(#0c59b9 0, #18a0ee 10%, #12a0f0 50%, #0f8ee0 90%, #0b73c5 100%); border-left: 1px solid #0a3f9c; }
.ti { width: 14px; height: 14px; display: block; flex: none; }
.ti-a { background: #8ab8e8; }
.ti-b { background: #c9d8ec; }
.ti-c { background: #4a6a88; border-radius: 50%; }
.ti-d { background: #5fb040; margin-left: 2px; }
.clock { margin-left: auto; padding-right: 15px; font-size: 12px; color: #e6f4ff; }

.ime { position: absolute; left: 0; top: 973px; width: 148px; height: 21px; display: flex; align-items: center; gap: 6px; padding-left: 2px; background: #f3f7fc; }
.ime svg { width: 16px; height: 16px; }
.ime-s { width: 18px; height: 18px; border-radius: 4px; background: #e0552a; color: #fff; font: bold 16px/18px "Liberation Sans", sans-serif; text-align: center; }
.ime-zh { font-size: 15px; font-weight: 700; color: #2f74b8; }
.ime-p { font: 12px "Liberation Sans", sans-serif; color: #2f74b8; }

.menu { position: absolute; background: #fff; border: 1px solid #aca899; padding: 2px 1px 2px 1px; color: #222; }
.menu-main { left: 291px; top: 45px; width: 193px; height: 510px; border-top: 0; padding-top: 3px; }
.menu-sub { left: 479px; top: 144px; width: 139px; height: 168px; padding-left: 1px; padding-right: 2px; }
.row { height: 18px; display: flex; align-items: center; padding-left: 16px; position: relative; white-space: nowrap; }
.row-on { background: #316ac5; color: #fff; }
.menu hr { height: 1px; margin: 3px 1px 5px; border: 0; background: #aca899; }
.acc { position: absolute; left: 132px; }
.arr { position: absolute; right: 7px; top: 5px; width: 0; height: 0; border-style: solid; border-width: 4px 0 4px 4px; border-color: transparent transparent transparent #111; }
.row-on .arr { border-left-color: #fff; }

.marks { position: absolute; left: 0; top: 0; width: 1280px; height: 1024px; pointer-events: none; fill: none; stroke: #c8161d; stroke-width: 1; }
.wm { position: absolute; left: 1060px; top: 1000px; color: #e0161c; font: 700 15px/18px "Liberation Sans", sans-serif; letter-spacing: 2px; text-shadow: 1px 0 0 #fff, -1px 0 0 #fff, 0 1px 0 #fff, 0 -1px 0 #fff; white-space: nowrap; }
.wm span { font-family: "Noto Sans CJK SC", sans-serif; font-size: 17px; letter-spacing: 0; }
```
